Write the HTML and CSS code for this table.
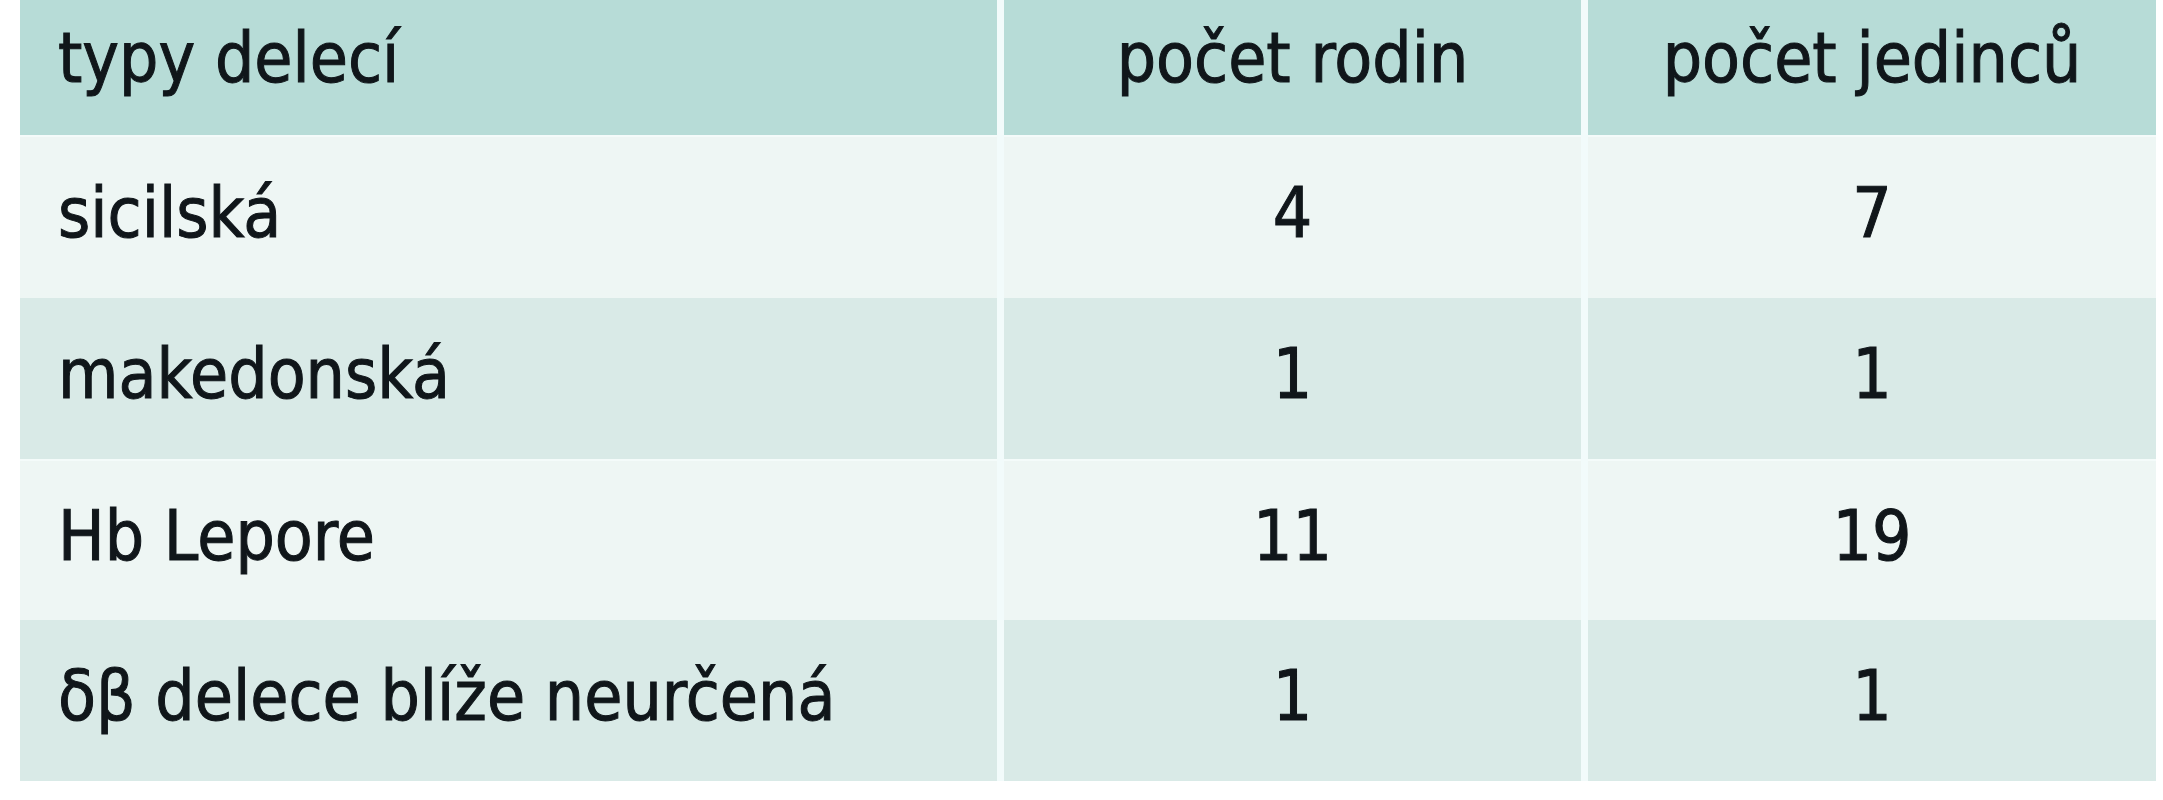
FILE: index.html
```html
<!DOCTYPE html>
<html lang="cs">
<head>
<meta charset="utf-8">
<title>Typy delecí</title>
<link rel="stylesheet" href="styles.css">
</head>
<body>
<div class="table">
  <div class="cell head first">typy delecí</div>
  <div class="cell head num">počet rodin</div>
  <div class="cell head num">počet jedinců</div>

  <div class="cell light first">sicilská</div>
  <div class="cell light num">4</div>
  <div class="cell light num">7</div>

  <div class="cell tint first">makedonská</div>
  <div class="cell tint num">1</div>
  <div class="cell tint num">1</div>

  <div class="cell light first">Hb Lepore</div>
  <div class="cell light num">11</div>
  <div class="cell light num">19</div>

  <div class="cell tint first">δβ delece blíže neurčená</div>
  <div class="cell tint num">1</div>
  <div class="cell tint num">1</div>
</div>
</body>
</html>
```

FILE: styles.css
```css
html, body {
  margin: 0;
  padding: 0;
  background: #ffffff;
}

body {
  padding-left: 20px;
}

.table {
  display: grid;
  width: 2136px;
  grid-template-columns: 977px 577px 568px;
  grid-template-rows: 135px 163px 161px 161px 161px;
  column-gap: 7px;
  background: #f2fbfb;
  font-family: "DejaVu Sans Condensed", "DejaVu Sans", sans-serif;
  font-stretch: condensed;
  font-size: 69px;
  line-height: 1;
  color: #10161a;
  -webkit-text-stroke: 1px #10161a;
}

.cell {
  box-sizing: border-box;
  display: flex;
  align-items: center;
  padding-bottom: 9px;
  white-space: nowrap;
}

.first {
  padding-left: 38px;
}

.num {
  justify-content: center;
}

.head {
  background: #b7dcd7;
  padding-bottom: 18px;
}

.light {
  background: #eef6f4;
  border-top: 2px solid #f4fbfa;
}

.tint {
  background: #d9eae7;
}
```
